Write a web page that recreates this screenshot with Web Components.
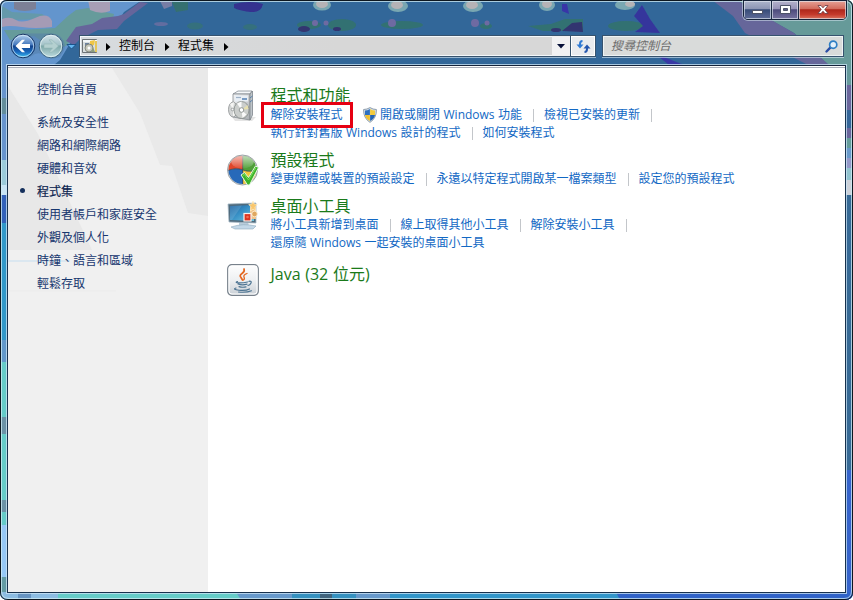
<!DOCTYPE html>
<html lang="zh-Hant">
<head>
<meta charset="utf-8">
<title>程式集</title>
<style>
  html, body {
    margin: 0;
    padding: 0;
    background: #fff;
  }
  body {
    width: 853px;
    height: 600px;
    overflow: hidden;
    font-family: "Open Sans", "Noto Sans CJK TC", sans-serif;
    font-size: 12px;
  }
</style>
</head>
<body>
<aero-window>
  <caption-buttons slot="caption"></caption-buttons>
  <nav-buttons slot="toolbar"></nav-buttons>
  <address-bar slot="toolbar">
    <crumb-item>控制台</crumb-item>
    <crumb-item>程式集</crumb-item>
  </address-bar>
  <search-box slot="toolbar">搜尋控制台</search-box>

  <side-nav slot="side">
    <side-item home>控制台首頁</side-item>
    <side-item>系統及安全性</side-item>
    <side-item>網路和網際網路</side-item>
    <side-item>硬體和音效</side-item>
    <side-item current>程式集</side-item>
    <side-item>使用者帳戶和家庭安全</side-item>
    <side-item>外觀及個人化</side-item>
    <side-item>時鐘、語言和區域</side-item>
    <side-item>輕鬆存取</side-item>
  </side-nav>

  <category-group icon="programs">
    <span slot="title">程式和功能</span>
    <link-row>
      <task-link marked>解除安裝程式</task-link>
      <task-link shield divider>開啟或關閉 Windows 功能</task-link>
      <task-link divider>檢視已安裝的更新</task-link>
    </link-row>
    <link-row>
      <task-link divider>執行針對舊版 Windows 設計的程式</task-link>
      <task-link>如何安裝程式</task-link>
    </link-row>
  </category-group>
  <category-group icon="defaults">
    <span slot="title">預設程式</span>
    <link-row>
      <task-link divider>變更媒體或裝置的預設設定</task-link>
      <task-link divider>永遠以特定程式開啟某一檔案類型</task-link>
      <task-link>設定您的預設程式</task-link>
    </link-row>
  </category-group>
  <category-group icon="gadgets">
    <span slot="title">桌面小工具</span>
    <link-row>
      <task-link divider>將小工具新增到桌面</task-link>
      <task-link divider>線上取得其他小工具</task-link>
      <task-link divider>解除安裝小工具</task-link>
    </link-row>
    <link-row>
      <task-link>還原隨 Windows 一起安裝的桌面小工具</task-link>
    </link-row>
  </category-group>
  <category-group icon="java">
    <span slot="title">Java (32 位元)</span>
  </category-group>
</aero-window>

<script>
const ICONS = {
  programs: `
    <svg width="32" height="32" viewBox="0 0 32 32">
      <defs>
        <linearGradient id="bx" x1="0" y1="0" x2="1" y2="1"><stop offset="0" stop-color="#f4f5f6"/><stop offset="1" stop-color="#a9adb2"/></linearGradient>
      </defs>
      <path d="M5 27l3 4h17l4-4z" fill="#d8d8d8" opacity=".7"/>
      <path d="M6 4l5-3h14l-2 3z" fill="#f6f8fa" stroke="#868d94" stroke-width=".8"/>
      <path d="M6 4h17v26L6 27z" fill="url(#bx)" stroke="#858b91" stroke-width=".8"/>
      <path d="M23 4l2.500-3v24L23 30z" fill="#bfc5ca" stroke="#7e858b" stroke-width=".8"/>
      <path d="M8 5.500h13v6H8z" fill="#e9eff5"/>
      <path d="M9 7.500h5" stroke="#9db1c6" stroke-width="1.200"/>
      <path d="M15 9h5" stroke="#5c86b8" stroke-width="1.600"/>
      <path d="M23 8l2.500-2M23 12l2.500-2" stroke="#5b84ae"/>
      <ellipse cx="6" cy="19.500" rx="4.500" ry="7.500" fill="#d3d5d5" stroke="#8d9192" stroke-width=".8"/>
      <path d="M6 19.500L3 14l4-2zM6 19.500l3 5-3 2z" fill="#f5f5f3"/>
      <ellipse cx="14.500" cy="20" rx="7.500" ry="8.500" fill="#cbcecc" stroke="#858b89" stroke-width=".8"/>
      <path d="M14.500 20L10 13.500l4.500-2zM14.500 20l5 4.500-4 3.500z" fill="#fafafa"/>
      <path d="M14.500 20l6-5 1 4z" fill="#e6dfae"/>
      <circle cx="14.500" cy="20" r="2.300" fill="#fff" stroke="#888f8d" stroke-width=".9"/>
      <circle cx="5.500" cy="19.500" r="1.300" fill="#f4f4f4" stroke="#929695" stroke-width=".8"/>
    </svg>`,
  defaults: `
    <svg width="32" height="32" viewBox="0 0 32 32">
      <defs>
        <linearGradient id="gl" x1="0" y1="0" x2="0" y2="1"><stop offset="0" stop-color="#fff" stop-opacity=".75"/><stop offset="1" stop-color="#fff" stop-opacity=".05"/></linearGradient>
        <clipPath id="ball"><circle cx="15.500" cy="16" r="14"/></clipPath>
      </defs>
      <circle cx="15.500" cy="16" r="15" fill="#d5d8da" stroke="#8b9296" stroke-width=".8"/>
      <g clip-path="url(#ball)">
        <path d="M0 0h16v16q-8-3-16 1z" fill="#e0462b"/>
        <path d="M16 0h16v15q-8 4-16 1z" fill="#4f9f38"/>
        <path d="M0 17q8-4 16-1v16h-16z" fill="#2769b9"/>
        <path d="M16 16q8 3 16-1v17h-16z" fill="#f3c63b"/>
        <path d="M15.700 0v32M0 17q8-4 16-1t16-1" fill="none" stroke="#394954" stroke-width=".8"/>
        <ellipse cx="15.500" cy="7" rx="11.500" ry="7.500" fill="url(#gl)"/>
      </g>
      <path d="M14 21l3.500-2.500 4 5L28.500 12l3 1.500L22.500 31h-2z" fill="#3cb32a" stroke="#e8f8e3" stroke-width="1"/>
      <path d="M16 21.500l1.500-1 4 5.500L29 13.500" fill="none" stroke="#7ddc5b" stroke-width="1"/>
    </svg>`,
  gadgets: `
    <svg width="32" height="32" viewBox="0 0 32 32">
      <defs>
        <linearGradient id="sc" x1="0" y1="0" x2="1" y2="1"><stop offset="0" stop-color="#1b609f"/><stop offset=".45" stop-color="#378fc5"/><stop offset="1" stop-color="#71c7e2"/></linearGradient>
      </defs>
      <path d="M12 22h9l1 4h-10z" fill="#b9cddb"/>
      <path d="M4 27q12-4 25-1l-3 3H8z" fill="#c3d8e8" stroke="#8fabbe" stroke-width=".6"/>
      <path d="M1 4l28-1v20L2 22z" fill="#4f6a7c" stroke="#a7bac6" stroke-width=".8"/>
      <path d="M3 6l24-1v16L3 20z" fill="url(#sc)"/>
      <path d="M3 6l12-.5L5 20H3z" fill="#fff" opacity=".13"/>
      <path d="M23 7h6v12h-6z" fill="#efc38a"/>
      <path d="M26 1l1.200 3 3 .5-2.200 2.500.5 4-2.500-2-2.500 2 .5-4-2.200-2.500 3-.5z" fill="#f9c76d" stroke="#fff0ce" stroke-width=".7"/>
      <circle cx="27.500" cy="14" r="2.800" fill="#dfa760" stroke="#fff1d7" stroke-width=".8"/>
      <rect x="17" y="13.500" width="7" height="7.500" fill="#dc3522" stroke="#f8f2ef" stroke-width="1.200"/>
      <circle cx="20.500" cy="17" r="1.300" fill="#f26b50"/>
    </svg>`,
  java: `
    <svg width="32" height="32" viewBox="0 0 32 32">
      <defs>
        <linearGradient id="jv" x1="0" y1="0" x2="0" y2="1"><stop offset="0" stop-color="#fefefe"/><stop offset=".5" stop-color="#eef0f2"/><stop offset="1" stop-color="#c9cfd5"/></linearGradient>
      </defs>
      <rect x=".7" y=".7" width="30.600" height="30.600" rx="4" fill="url(#jv)" stroke="#77818b" stroke-width="1.200"/>
      <rect x="2" y="2" width="28" height="28" rx="3" fill="none" stroke="#fff" stroke-width="1"/>
      <g fill="none" stroke-linecap="round">
        <path d="M17 5q1 2.500-2 4.500t-1 4l1.500 2.500" stroke="#e4661f" stroke-width="1.700"/>
        <path d="M20 9.500q-4 1.500-3 3.500t-.5 3" stroke="#e4661f" stroke-width="1.300"/>
        <path d="M10.500 17.500q-3 1 1 1.300t9-.8M11 20q4 1.500 9 .2M12 22.600q3.500 1.200 7 .2" stroke="#4d7492" stroke-width="1.200"/>
        <path d="M22 17.300q3-.5 2 1.700t-3 2.500" stroke="#4d7492" stroke-width="1.200"/>
        <path d="M9 24q-4 1.500 3 2.200t10.500-1.300M11.500 28q8 .8 13-1.300" stroke="#4d7492" stroke-width="1.100"/>
      </g>
    </svg>`
};

function attach(el, html) {
  el.attachShadow({ mode: "open" }).innerHTML = html;
}

class AeroWindow extends HTMLElement {
  constructor() {
    super();
    attach(this, `
      <style>
        * { box-sizing: border-box; }
        :host {
          display: block;
          position: relative;
          width: 853px;
          height: 600px;
        }
        .backdrop { position: absolute; left: 0; top: 0; }
        .frame {
          position: relative;
          display: flex;
          flex-direction: column;
          height: 600px;
          padding: 0 7px 7px;
        }
        .caption { display: flex; justify-content: flex-end; height: 35px; margin-right: -1px; }
        .toolbar { display: flex; height: 30px; padding: 0 1px 0 3px; }
        .client {
          flex: 1;
          display: flex;
          border: 1px solid #17314d;
          border-top-color: #15233a;
          outline: 1px solid rgba(205, 229, 246, .75);
          box-shadow: inset 0 1px #fff, inset 0 2px #a9adb8;
          background: #fff;
          padding-top: 2px;
        }
        main {
          flex: 1;
          padding: 19px 0 0 19px;
        }
      </style>
      <svg class="backdrop" width="853" height="600" viewBox="0 0 853 600">
        <defs>
          <clipPath id="win"><path d="M7 0H846Q853 0 853 7V592Q853 600 845 600H8Q0 600 0 592V7Q0 0 7 0Z"/></clipPath>
          <filter id="soft"><feGaussianBlur stdDeviation=".7"/></filter>
        </defs>
        <g clip-path="url(#win)">
          <rect width="853" height="600" fill="#326799"/>
          <g filter="url(#soft)">
            <path d="M0 0H142L124 12 116 24 92 29 72 40 60 60 48 70H0Z" fill="#6395cd"/>
            <path d="M88 8L114 14 112 22 92 27 76 34 66 46 55 50 34 36 10 40 4 30 20 30 55 28 68 16 76 10Z" fill="#669b9b"/>
            <path d="M2 6l10 6 30 2 8 5-40 1-8 8z" fill="#669b9b" opacity=".7"/>
            <path d="M2 19Q10 16 16 20T35 18T52 21V27Q35 29 22 27T2 27Z" fill="#a59bb5"/>
            <path d="M14 0h22v9q-12 4-22 0z" fill="#7b8096"/>
            <path d="M88 0h22v11q-9 4-20 -1z" fill="#a79eb5"/>
            <path d="M140 2L124 14l-6 2-16 2-10 6-16 3-10 14 8 4 6-6 18-9 19-1 7-8 24-18z" fill="#66659b"/>
            <path d="M160 1h12v5l-8 3z" fill="#777da5"/>
            <path d="M172 2h16v8l-12 2z" fill="#367070"/>
            <ellipse cx="195" cy="26" rx="8" ry="3.500" fill="#34707d"/>
            <ellipse cx="250" cy="27" rx="7" ry="3" fill="#34707d"/>
            <ellipse cx="161" cy="24" rx="7" ry="2" fill="#626da0"/>
            <path d="M234 4q16-4 29 0-2 9-12 8t-17-4z" fill="#34318f"/>
            <g fill="#79a7b2"><ellipse cx="322" cy="5" rx="9" ry="5.500"/><ellipse cx="398" cy="6" rx="10" ry="6"/><ellipse cx="473" cy="6" rx="10" ry="6"/><ellipse cx="547" cy="5" rx="8" ry="6"/><ellipse cx="625" cy="5" rx="10" ry="5"/></g>
            <g fill="#b5b3b6"><ellipse cx="322" cy="4" rx="6" ry="4"/><ellipse cx="397" cy="5" rx="6" ry="4"/><ellipse cx="472" cy="5" rx="6" ry="4"/><ellipse cx="547" cy="4" rx="5" ry="4"/><ellipse cx="630" cy="4" rx="5" ry="3"/></g>
            <g fill="#327172"><ellipse cx="309" cy="25" rx="12" ry="4"/><ellipse cx="342" cy="25" rx="14" ry="6"/><ellipse cx="402" cy="25" rx="21" ry="4"/><ellipse cx="486" cy="26" rx="6" ry="3"/><path d="M528 26l23-2 14-5h18v12h-40z"/><ellipse cx="626" cy="26" rx="18" ry="5"/></g>
            <g fill="#33346f"><ellipse cx="304" cy="29" rx="6" ry="3"/><ellipse cx="337" cy="29" rx="4" ry="2"/><ellipse cx="556" cy="30" rx="5" ry="2"/><path d="M562 31l10-8 10-1 1 10z"/></g>
            <g fill="#6e6ba2"><circle cx="315" cy="23" r="3"/><circle cx="326" cy="23" r="2.500"/><circle cx="392" cy="23" r="4"/><circle cx="475" cy="23" r="4"/><circle cx="487" cy="23" r="2.500"/></g>
            <path d="M562 4h5l2 10-7-3z" fill="#3834a8"/>
            <path d="M642 5l8 14 10 14-25-1 8-6-9-10z" fill="#36359c"/>
            <path d="M664 57l20 8h-15l-10-8z" fill="#3939a5"/>
            <path d="M737 0H853V68H832L794 33 760 14Z" fill="#669a99"/>
            <path d="M712 0h25l24 14 33 19 36 33h-20L745 33l-12-17z" fill="#66669a"/>
          </g>
          <!-- side and bottom borders -->
          <g>
            <path d="M1 65h7v95h-7z" fill="#6794cd"/><path d="M1 98h7v16h-7z" fill="#638d9b"/>
            <path d="M1 160h7v30h-7z" fill="#9bcad9"/><path d="M1 185h7v10h-7z" fill="#c8e4f5"/>
            <path d="M1 195h7v28h-7z" fill="#3261b9"/><path d="M1 223h7v117h-7z" fill="#3198c9"/>
            <path d="M1 340h7v22h-7z" fill="#6298ca"/><path d="M1 362h7v163h-7z" fill="#65cbc8"/>
            <path d="M1 417h7v17h-7zM1 500h7v12h-7z" fill="#6b92a6"/>
            <path d="M1 525h7v52h-7z" fill="#96c8f6"/><path d="M1 577h7v15h-7z" fill="#639ba4"/>
            <path d="M845 65h7v20h-7z" fill="#66999b"/><path d="M845 85h7v25h-7zM845 128h7v10h-7z" fill="#6b669c"/>
            <path d="M845 110h7v18h-7z" fill="#356699"/><path d="M845 138h7v10h-7z" fill="#659d9b"/>
            <path d="M845 148h7v10h-7z" fill="#6a9acb"/><path d="M845 158h7v10h-7z" fill="#9599c9"/>
            <path d="M845 168h7v12h-7z" fill="#92c4cf"/><path d="M845 180h7v15h-7z" fill="#ccd1d9"/>
            <path d="M845 195h7v275h-7z" fill="#376a95"/><path d="M845 470h7v130h-7z" fill="#3563cb"/>
            <path d="M0 592h62v8h-62z" fill="#8cbce2"/><path d="M18 593h13v6h-13z" fill="#6794c2"/>
            <path d="M58 592h185v8h-185z" fill="#65ccc8"/>
            <path d="M236 592h60v8h-55z" fill="#6799cb"/><path d="M292 592h66v8h-66z" fill="#3591c0"/>
            <path d="M320 594h12v5h-12z" fill="#41647e"/><path d="M356 592h36v8h-36z" fill="#6799cb"/>
            <path d="M390 592h230v8h-230z" fill="#3296ca"/><path d="M616 592h237v8h-233z" fill="#3063c8"/>
          </g>
        </g>
        <path d="M7 .5H846Q852.500 .5 852.500 7V592Q852.500 599.500 845 599.500H8Q.5 599.500 .5 592V7Q.5 .5 7 .5Z" fill="none" stroke="#0d1720"/>
        <path d="M8 1.500H845Q851.500 1.500 851.500 8V591Q851.500 598.500 844 598.500H9Q1.500 598.500 1.500 591V8Q1.500 1.500 8 1.500Z" fill="none" stroke="#d2edf6" stroke-opacity=".75"/>
      </svg>
      <div class="frame">
        <div class="caption"><slot name="caption"></slot></div>
        <div class="toolbar"><slot name="toolbar"></slot></div>
        <div class="client">
          <slot name="side"></slot>
          <main><slot></slot></main>
        </div>
      </div>`);
  }
}

class CaptionButtons extends HTMLElement {
  constructor() {
    super();
    attach(this, `
      <style>
        :host {
          display: flex;
          box-sizing: border-box;
          width: 104px;
          height: 20px;
          border: 1px solid #16233a;
          border-radius: 0 0 5px 5px;
          box-shadow: 0 0 0 1px rgba(214, 230, 240, .55);
          overflow: hidden;
        }
        div {
          display: flex;
          align-items: center;
          justify-content: center;
          width: 27px;
          box-shadow: inset 0 0 0 1px rgba(225, 232, 240, .65);
          background: linear-gradient(#adb5cc 0, #8b94b3 45%, #364b78 48%, #5f6b98 100%);
          border-right: 1px solid #1e2b45;
        }
        .max { width: 26px; background: linear-gradient(#b4b2cb 0, #9692b7 45%, #4c4a7b 48%, #77739f 100%); }
        .close {
          flex: 1;
          border: 0;
          background: linear-gradient(#e5a196 0, #d1695a 45%, #ad271b 48%, #c43a2c 75%, #d97460 100%);
        }
      </style>
      <div><svg width="13" height="12"><rect x="1.500" y="6.500" width="10" height="3" fill="#fff" stroke="#4d5368"/></svg></div>
      <div class="max"><svg width="13" height="12"><path d="M1.500 1.500h10v8h-10zM4.500 4.500v2h4v-2z" fill="#fff" fill-rule="evenodd" stroke="#4d5368"/></svg></div>
      <div class="close"><svg width="14" height="12"><path d="M2 1.500h3l2 2.300 2-2.300h3L8.800 5.500l3.200 4H9L7 7.200 5 9.500H2l3.200-4z" fill="#fff" stroke="#6a3740" stroke-width=".8"/></svg></div>`);
  }
}

class NavButtons extends HTMLElement {
  constructor() {
    super();
    attach(this, `
      <style>
        :host { display: block; width: 69px; height: 26px; margin-top: -2px; }
        svg { display: block; }
      </style>
      <svg width="69" height="27" viewBox="0 0 69 27">
        <defs>
          <linearGradient id="b" x1="0" y1="0" x2="0" y2="1"><stop offset="0" stop-color="#b7d3ef"/><stop offset=".45" stop-color="#4478bd"/><stop offset=".5" stop-color="#12428c"/><stop offset=".75" stop-color="#1968bd"/><stop offset="1" stop-color="#3fc4f4"/></linearGradient>
          <linearGradient id="f" x1="0" y1="0" x2="0" y2="1"><stop offset="0" stop-color="#d3e3ea"/><stop offset=".45" stop-color="#a3c2c8"/><stop offset=".5" stop-color="#7da7a8"/><stop offset="1" stop-color="#bfdde0"/></linearGradient>
        </defs>
        <path d="M13 .5H43Q53 2 55 12q0 6-5 12-9 4-18-3-6-2-10 2-11 6-20-4Q-2 4 13 .5Z" fill="#547ea9" opacity=".55"/>
        <circle cx="13" cy="13" r="11.800" fill="url(#b)" stroke="#1c3865"/>
        <circle cx="13" cy="13" r="10.700" fill="none" stroke="#d7ecfa" stroke-opacity=".75"/>
        <path d="M5.500 13l6.500-6.200h3L11.500 11h8.500v4h-8.500l3.500 4.200h-3z" fill="#fff"/>
        <circle cx="41" cy="13" r="11.800" fill="url(#f)" stroke="#3f6682"/>
        <circle cx="41" cy="13" r="10.700" fill="none" stroke="#e8f6f7" stroke-opacity=".75"/>
        <path d="M48.500 13l-6.500-6.200h-3l3.500 4.200h-8.500v4h8.500l-3.500 4.200h3z" fill="#b4d0d0" stroke="#8fb3b2" stroke-width=".5"/>
        <path d="M57 11.500h9l-4.500 4.500z" fill="#63b5f0" stroke="#174d83" stroke-width=".9"/>
      </svg>`);
  }
}

class AddressBar extends HTMLElement {
  constructor() {
    super();
    attach(this, `
      <style>
        :host {
          display: flex;
          box-sizing: border-box;
          width: 517px;
          height: 22px;
          border: 1px solid #37536e;
          box-shadow: inset 0 0 0 1px #f4f8fb, 0 1px rgba(220, 235, 245, .6);
          background: linear-gradient(90deg, #d7dbde, #d7d7d7 50%);
          color: #000;
        }
        .place { display: block; margin: 2px 8px 0 2px; }
        .first { display: block; margin: 7px 8px 0 0; }
        .crumbs { display: flex; flex: 1; }
        .btn { display: flex; align-items: center; justify-content: center; width: 18px; background: #f1f1f2; }
        .refresh { width: 24px; border-left: 1px solid #37536e; box-shadow: inset 0 0 0 1px #fff; background: #e9ebee; }
      </style>
      <svg class="place" width="16" height="16" viewBox="0 0 16 16">
        <path d="M.5 1.500h14v13h-14z" fill="#d9dfdf" stroke="#6d7377"/>
        <path d="M1 2h14v2h-14z" fill="#f4f8fa"/>
        <path d="M13 3h2v11h-2z" fill="#e6c759"/>
        <path d="M3 5h4v4h-4z" fill="#6d83a0"/><path d="M8 3l5-1-1 5-4 1z" fill="#efc646"/>
        <circle cx="7" cy="10" r="4" fill="#c6c8bc" stroke="#73776e" stroke-width=".8"/>
        <circle cx="7" cy="10" r="1.500" fill="#fff"/>
        <path d="M11 9l2 5h-4z" fill="#8b9c7d"/>
      </svg>
      <svg class="first" width="5" height="8"><path d="M0 0l4.500 4-4.500 4z" fill="#000"/></svg>
      <div class="crumbs"><slot></slot></div>
      <div class="btn"><svg width="8" height="5"><path d="M0 0h8l-4 4.500z" fill="#071038"/></svg></div>
      <div class="btn refresh">
        <svg width="15" height="13" viewBox="0 0 15 13">
          <path d="M6.500 1Q4 1 4 4v1" fill="none" stroke="#2f7ad4" stroke-width="2"/><path d="M.5 4.500h7L4 8.500z" fill="#2f7ad4"/>
          <path d="M8.500 12q2.500 0 2.500-3V8" fill="none" stroke="#2456ae" stroke-width="2"/><path d="M7.500 8.500h7L11 4.500z" fill="#2456ae"/>
        </svg>
      </div>`);
  }
}

class CrumbItem extends HTMLElement {
  constructor() {
    super();
    attach(this, `
      <style>
        :host { display: flex; height: 19px; line-height: 19px; margin-right: 8px; }
        svg { margin: 7px 0 0 10px; }
      </style>
      <slot></slot><svg width="5" height="8"><path d="M0 0l4.500 4-4.500 4z" fill="#000"/></svg>`);
  }
}

class SearchBox extends HTMLElement {
  constructor() {
    super();
    attach(this, `
      <style>
        :host {
          display: flex;
          justify-content: space-between;
          box-sizing: border-box;
          width: 242px;
          height: 22px;
          margin-left: 6px;
          padding: 0 5px 0 8px;
          border: 1px solid #37536e;
          box-shadow: inset 0 0 0 1px #eef3f4, 0 1px rgba(220, 235, 245, .6);
          background: #d9dbda;
          color: #6d6d6d;
          font-style: italic;
          line-height: 19px;
        }
        svg { margin-top: 4px; }
      </style>
      <span><slot></slot></span>
      <svg width="13" height="13" viewBox="0 0 13 13">
        <path d="M1.500 11.500l4-4.200" stroke="#2c4fa5" stroke-width="2.400" stroke-linecap="round"/>
        <circle cx="8.200" cy="4.700" r="3.600" fill="#e4f1fa" stroke="#2f7fc4" stroke-width="1.700"/>
      </svg>`);
  }
}

class SideNav extends HTMLElement {
  constructor() {
    super();
    attach(this, `
      <style>
        :host {
          display: block;
          position: relative;
          box-sizing: border-box;
          width: 200px;
          padding: 10px 0 0 12px;
          background: #f0f0f0;
        }
        .glass { position: absolute; left: 0; top: 0; }
        .items { position: relative; }
      </style>
      <svg class="glass" width="200" height="230">
        <path d="M104 0L132 45 152 97 164 98 180 145 200 148V0z" fill="#e9e9e9"/>
        <path d="M0 18L30 66 84 182H0z" fill="#e8e8e8"/>
        <path d="M0 193h62" stroke="#dbe7f0" stroke-width="2"/>
        <path d="M0 223h108" stroke="#ebebeb"/>
      </svg>
      <div class="items"><slot></slot></div>`);
  }
}

class SideItem extends HTMLElement {
  constructor() {
    super();
    attach(this, `
      <style>
        :host {
          display: flex;
          align-items: center;
          height: 23px;
          color: #17376f;
        }
        :host([home]) { height: 22px; margin-bottom: 10px; }
        :host([current]) { color: #0d2550; -webkit-text-stroke: .2px; }
        i { width: 5px; height: 5px; margin-right: 12px; border-radius: 50%; }
        :host([current]) i { background: #15305c; }
      </style>
      <i></i><slot></slot>`);
  }
}

class CategoryGroup extends HTMLElement {
  connectedCallback() {
    attach(this, `
      <style>
        :host { display: flex; gap: 11.500px; margin-bottom: 9px; }
        :host([icon="gadgets"]) { margin-bottom: 12px; }
        svg { display: block; margin-top: 3px; }
        :host([icon="java"]) svg { margin-top: 0; }
        h2 {
          margin: 0;
          height: 19px;
          line-height: 19px;
          font-size: 16px;
          font-weight: normal;
          color: #1a7a1a;
          white-space: nowrap;
        }
        :host([icon="programs"]) h2 { line-height: 17px; }
        :host([icon="java"]) h2 { line-height: 20px; word-spacing: .5px; }
      </style>
      ${ICONS[this.getAttribute("icon")]}
      <div>
        <h2><slot name="title"></slot></h2>
        <slot></slot>
      </div>`);
  }
}

class LinkRow extends HTMLElement {
  constructor() {
    super();
    attach(this, `
      <style>
        :host { display: flex; height: 18px; line-height: 18px; }
      </style>
      <slot></slot>`);
  }
}

class TaskLink extends HTMLElement {
  connectedCallback() {
    const shield = this.hasAttribute("shield") ? `
      <svg width="14" height="16" viewBox="0 0 14 16">
        <path d="M7 .6Q10 2.500 13.400 2.500 13.800 11 7 15.400 .2 11 .6 2.500 4 2.500 7 .6Z" fill="#d9e2ea" stroke="#76899a" stroke-width=".8"/>
        <path d="M6.900 2Q4.500 3.500 2 3.600V8h4.900z" fill="#2c6fc0"/><path d="M7.100 2Q9.500 3.500 12 3.600V8H7.100z" fill="#f3cb3c"/>
        <path d="M2 8h4.900v6Q2.500 11.500 2 8z" fill="#f0c02f"/><path d="M12 8H7.100v6Q11.500 11.500 12 8z" fill="#2363b3"/>
      </svg>` : "";
    const mark = this.hasAttribute("marked") ? `<b></b>` : "";
    attach(this, `
      <style>
        :host {
          display: flex;
          position: relative;
          color: #1268c4;
          white-space: nowrap;
          word-spacing: .4px;
        }
        :host([marked]) { margin-right: 20.500px; }
        :host([divider])::after {
          content: "";
          width: 1px;
          height: 13px;
          margin: 3px 10px 0 11px;
          background: #c3c6ca;
        }
        svg { margin: 1px 3px 0 0; }
        b {
          position: absolute;
          left: -9.500px;
          top: -4px;
          box-sizing: border-box;
          width: 92px;
          height: 26px;
          border: 3px solid #e60012;
          z-index: 1;
        }
      </style>
      ${shield}<span><slot></slot></span>${mark}`);
  }
}

customElements.define("aero-window", AeroWindow);
customElements.define("caption-buttons", CaptionButtons);
customElements.define("nav-buttons", NavButtons);
customElements.define("address-bar", AddressBar);
customElements.define("crumb-item", CrumbItem);
customElements.define("search-box", SearchBox);
customElements.define("side-nav", SideNav);
customElements.define("side-item", SideItem);
customElements.define("category-group", CategoryGroup);
customElements.define("link-row", LinkRow);
customElements.define("task-link", TaskLink);
</script>
</body>
</html>
